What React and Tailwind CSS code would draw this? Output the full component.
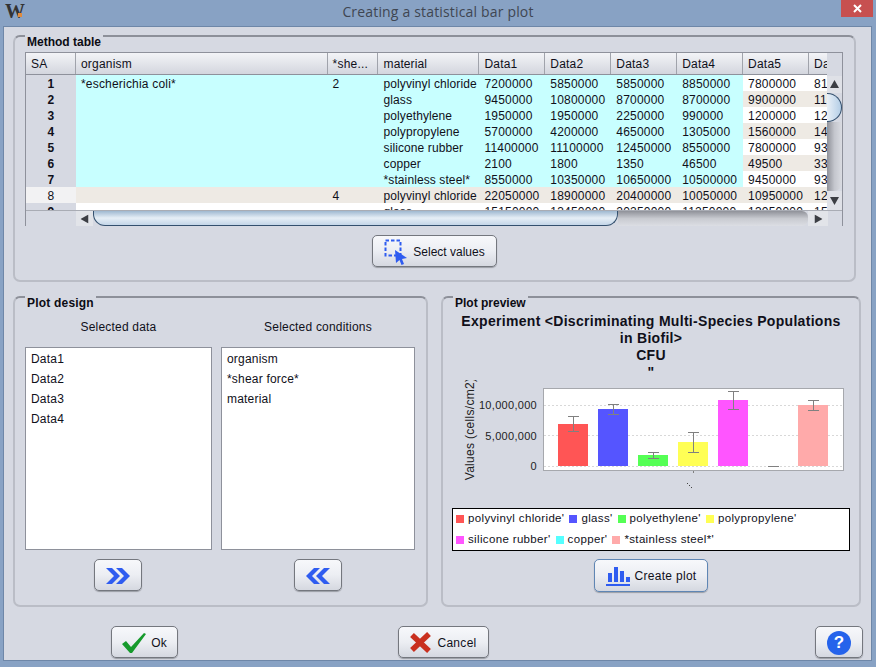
const font = { fontFamily: '"Liberation Sans", Arial, sans-serif' }

const columns = [
  { label: 'organism', w: 'w-[252px] pl-[5px]' },
  { label: '*she...', w: 'w-[50px] pl-[5px]' },
  { label: 'material', w: 'w-[102px] pl-[6px] tracking-[0.1px]' },
  { label: 'Data1', w: 'w-[66px] pl-[5px]' },
  { label: 'Data2', w: 'w-[66px] pl-[5px]' },
  { label: 'Data3', w: 'w-[66px] pl-[5px]' },
  { label: 'Data4', w: 'w-[66px] pl-[5px]' },
  { label: 'Data5', w: 'w-[66px] pl-[5px]' },
  { label: 'Da', w: 'w-[18px] pl-[5px]' },
]

const rows = [
  ['*escherichia coli*', '2', 'polyvinyl chloride', '7200000', '5850000', '5850000', '8850000', '7800000', '81'],
  ['', '', 'glass', '9450000', '10800000', '8700000', '8700000', '9900000', '11'],
  ['', '', 'polyethylene', '1950000', '1950000', '2250000', '990000', '1200000', '12'],
  ['', '', 'polypropylene', '5700000', '4200000', '4650000', '1305000', '1560000', '14'],
  ['', '', 'silicone rubber', '11400000', '11100000', '12450000', '8550000', '7800000', '93'],
  ['', '', 'copper', '2100', '1800', '1350', '46500', '49500', '33'],
  ['', '', '*stainless steel*', '8550000', '10350000', '10650000', '10500000', '9450000', '93'],
  ['', '4', 'polyvinyl chloride', '22050000', '18900000', '20400000', '10050000', '10950000', '12'],
  ['', '', 'glass', '15150000', '13450000', '20250000', '11250000', '13050000', '15'],
]

function cellBg(rowIndex, colIndex) {
  if (rowIndex === 7) return 'bg-[#eeeae4]'
  if (rowIndex === 8) return 'bg-white'
  if (colIndex < 7) return 'bg-[#c8ffff]'
  return rowIndex % 2 === 0 ? 'bg-white' : 'bg-[#eeeae4]'
}

function Group({ title, className, children }) {
  return (
    <div className={`relative rounded-[7px] border-2 border-[#babdc6] border-t-[#8d9099] ${className}`}>
      <div className="absolute left-[10px] top-[-2px] h-[15px] bg-[#d6d9e2] px-[2px] text-[12px] font-bold leading-[15px] text-[#0c0c14]">
        {title}
      </div>
      {children}
    </div>
  )
}

function Button({ className = '', children }) {
  return (
    <div className={`flex h-[32px] items-center justify-center rounded-[5px] border border-[#74777e] bg-gradient-to-b from-[#f7f8fb] via-[#eceef3] to-[#d5d8e0] pt-[1px] text-[12px] text-[#10101a] shadow-[0_1px_1px_#9a9da5] ${className}`}>
      {children}
    </div>
  )
}

function ArrowUp() {
  return <svg width="9" height="8" viewBox="0 0 9 8"><path d="M4.5 0 L9 8 H0 Z" fill="#3c3e44" /></svg>
}

function VerticalScroll() {
  return (
    <div className="flex h-full w-[15px] flex-col bg-[#d6d9e2]">
      <div className="h-[23px]" />
      <div className="flex h-[17px] items-center justify-center bg-[#dfe1e7] pb-[2px]"><ArrowUp /></div>
      <div className="h-[29px] rounded-r-full border border-l-0 border-[#34506e] bg-gradient-to-r from-[#e9f0f7] to-[#b4cee6]" />
      <div className="h-[69px] rounded-br-[8px] bg-gradient-to-r from-[#8f9199] via-[#c4c6cd] to-[#dadce2]" />
      <div className="flex h-[19px] items-center justify-center bg-[#dfe1e7]">
        <div className="rotate-180"><ArrowUp /></div>
      </div>
    </div>
  )
}

function HorizontalScroll() {
  return (
    <div className="flex h-[16px] border-t border-[#a9acb4] bg-[#d6d9e2]">
      <div className="w-[50px]" />
      <div className="flex w-[17px] items-center justify-center bg-[#e2e4e9]">
        <div className="-rotate-90"><ArrowUp /></div>
      </div>
      <div className="h-[15px] w-[525px] rounded-b-[12px] border-x border-b border-[#34506e] bg-gradient-to-b from-[#9fb8d0] via-[#e6eef6] to-[#c4d6e8]" />
      <div className="h-[15px] w-[190px] rounded-r-[6px] bg-gradient-to-b from-[#8f9199] via-[#c8cad0] to-[#dcdee4]" />
      <div className="flex w-[20px] items-center justify-center bg-[#e2e4e9]">
        <div className="rotate-90"><ArrowUp /></div>
      </div>
    </div>
  )
}

function MethodTable() {
  return (
    <div className="flex h-[174px] w-[818px] flex-col border border-[#8e919b] bg-[#d6d9e2] text-[12px] tracking-[0.2px] text-[#10101a]">
      <div className="flex h-[157px]">
        <div className="flex w-[802px] flex-col overflow-hidden">
          <div className="flex h-[22px] shrink-0 border-b border-[#8e919b] bg-gradient-to-b from-[#f3f4f7] to-[#d3d6de]">
            <div className="flex w-[50px] items-center border-r border-[#a0a3ab] pl-[5px]">SA</div>
            {columns.map((col) => (
              <div key={col.label} className={`flex ${col.w} items-center overflow-hidden whitespace-nowrap border-r border-[#a0a3ab] last:border-r-0`}>
                {col.label}
              </div>
            ))}
          </div>
          {rows.map((row, i) => (
            <div key={i} className="flex h-[16px] shrink-0">
              <div className={`w-[50px] text-center leading-[18px] ${i === 7 ? 'bg-[#f2f2f3]' : 'bg-[#d6d9e2] font-bold'}`}>{i + 1}</div>
              {row.map((value, j) => (
                <div key={j} className={`${columns[j].w} overflow-hidden whitespace-nowrap leading-[19px] ${cellBg(i, j)}`}>
                  {value}
                </div>
              ))}
            </div>
          ))}
        </div>
        <VerticalScroll />
      </div>
      <HorizontalScroll />
    </div>
  )
}

function SelectIcon() {
  return (
    <svg width="24" height="26" viewBox="0 0 24 26">
      <rect x="1.5" y="1.5" width="15" height="15" fill="none" stroke="#2f5cf0" strokeWidth="2" strokeDasharray="3.5 2" />
      <path d="M11 11 L23 19 L18 20 L20 25 L17.5 26 L15.5 21 L12 24 Z" fill="#2f5cf0" />
    </svg>
  )
}

function ListBox({ items }) {
  return (
    <div className="h-[203px] border border-[#8e919b] bg-white pl-[5px] pt-[1px] text-[12px] leading-[20px] tracking-[0.2px] text-[#10101a]">
      {items.map((item) => <div key={item}>{item}</div>)}
    </div>
  )
}

function DoubleChevron({ flip }) {
  return (
    <svg width="24" height="18" viewBox="0 0 24 18" className={flip ? 'rotate-180' : ''}>
      <path d="M0 1 H6 L14 9 L6 17 H0 L8 9 Z M10 1 H16 L24 9 L16 17 H10 L18 9 Z" fill="#2f5cf0" />
    </svg>
  )
}

const bars = [
  { x: 558, top: 424, fill: '#ff5555', err: [416, 431] },
  { x: 598, top: 409, fill: '#5555ff', err: [404, 414] },
  { x: 638, top: 455, fill: '#55ff55', err: [452, 458] },
  { x: 678, top: 442, fill: '#ffff55', err: [432, 452] },
  { x: 718, top: 400, fill: '#ff55ff', err: [391, 409] },
  { x: 758, top: 466, fill: '#55ffff', err: [466, 466] },
  { x: 798, top: 405, fill: '#ffaaaa', err: [400, 410] },
]

// svg origin sits at x 443 / y 380 of the window
function BarChart() {
  return (
    <svg width="416" height="115" viewBox="443 380 416 115" className="block" style={font}>
      <rect x="543.5" y="388.5" width="300" height="82" fill="#fff" stroke="#a6a8ad" />
      {[405.5, 435.5, 466.5].map((y) => (
        <line key={y} x1="544" x2="843" y1={y} y2={y} stroke="#d8d8d8" strokeDasharray="2 2" />
      ))}
      {bars.map((b) => (
        <g key={b.x}>
          <rect x={b.x} y={b.top} width="30" height={466 - b.top} fill={b.fill} />
          <line x1={b.x + 15.5} x2={b.x + 15.5} y1={b.err[0]} y2={b.err[1]} stroke="#808080" />
          <line x1={b.x + 10} x2={b.x + 21} y1={b.err[0] + 0.5} y2={b.err[0] + 0.5} stroke="#808080" />
          <line x1={b.x + 10} x2={b.x + 21} y1={b.err[1] + 0.5} y2={b.err[1] + 0.5} stroke="#808080" />
        </g>
      ))}
      <line x1="693.5" x2="693.5" y1="471" y2="473" stroke="#808080" />
      <text x="537" y="409" textAnchor="end" fontSize="11" letterSpacing="0.3" fill="#222">10,000,000</text>
      <text x="537" y="440" textAnchor="end" fontSize="11" letterSpacing="0.3" fill="#222">5,000,000</text>
      <text x="537" y="470" textAnchor="end" fontSize="11" letterSpacing="0.3" fill="#222">0</text>
      <text x="0" y="0" transform="translate(474 429) rotate(-90)" textAnchor="middle" fontSize="12" letterSpacing="0.3" fill="#222">Values (cells/cm2)</text>
      <rect x="687" y="483" width="1" height="1" fill="#444" />
      <rect x="689" y="485" width="1" height="1" fill="#444" />
      <rect x="691" y="487" width="1" height="1" fill="#444" />
    </svg>
  )
}

const legend = [
  [
    ['#ff5555', "polyvinyl chloride'"],
    ['#5555ff', "glass'"],
    ['#55ff55', "polyethylene'"],
    ['#ffff55', "polypropylene'"],
  ],
  [
    ['#ff55ff', "silicone rubber'"],
    ['#55ffff', "copper'"],
    ['#ffaaaa', "*stainless steel*'"],
  ],
]

function Legend() {
  return (
    <div className="mx-[9px] flex h-[43px] flex-col justify-center gap-[5px] border border-black bg-white pl-[3px] text-[11.5px] tracking-[0.35px] text-[#10101a]">
      {legend.map((line, i) => (
        <div key={i} className="flex h-[16px] items-center gap-[5px]">
          {line.map(([color, label]) => (
            <div key={label} className="flex items-center gap-[4px]">
              <span className="h-[8px] w-[8px]" style={{ backgroundColor: color }} />
              <span>{label}</span>
            </div>
          ))}
        </div>
      ))}
    </div>
  )
}

export default function App() {
  return (
    <div className="flex h-[667px] w-[876px] flex-col overflow-hidden bg-[#88a2c4]" style={font}>
      <div className="grid h-[26px] shrink-0 grid-cols-[44px_1fr_44px]">
        <div className="relative pl-[5px] pt-[1px] text-[20px] font-bold leading-[20px] text-[#333]" style={{ fontFamily: '"Liberation Serif", serif' }}>
          W
          <span className="absolute left-[18px] top-[13px] h-[4px] w-[4px] bg-[#e08a3c]" />
        </div>
        <div className="text-center text-[14px] leading-[24px] tracking-[0.17px] text-[#3f4652]" style={{ fontFamily: '"Open Sans", sans-serif' }}>
          Creating a statistical bar plot
        </div>
        <div className="flex justify-end pr-[3px]">
          <div className="flex h-[17px] w-[32px] items-center justify-center bg-[#c75050]">
            <svg width="9" height="9" viewBox="0 0 9 9"><path d="M1 1 L8 8 M8 1 L1 8" stroke="#fff" strokeWidth="2" /></svg>
          </div>
        </div>
      </div>

      <div className="ml-[3px] flex h-[635px] w-[869px] flex-col border border-[#6e87a8] bg-[#d6d9e2] pl-[9px] pt-[8px]">
        <Group title="Method table" className="h-[247px] w-[843px] pl-[10px] pt-[15px]">
          <MethodTable />
          <div className="mt-[9px] flex justify-center pr-[10px]">
            <Button className="w-[125px] gap-[5px]"><SelectIcon /><span>Select values</span></Button>
          </div>
        </Group>

        <div className="mt-[14px] flex gap-[13px]">
          <Group title="Plot design" className="h-[311px] w-[415px] pl-[10px] pt-[21px] text-[12px] tracking-[0.2px] text-[#10101a]">
            <div className="flex gap-[9px]">
              <div className="flex w-[187px] flex-col">
                <div className="mb-[12px] h-[16px] text-center leading-[16px]">Selected data</div>
                <ListBox items={['Data1', 'Data2', 'Data3', 'Data4']} />
                <div className="mt-[9px] flex justify-center pr-[2px]"><Button className="w-[48px]"><DoubleChevron /></Button></div>
              </div>
              <div className="flex w-[194px] flex-col">
                <div className="mb-[12px] h-[16px] text-center leading-[16px]">Selected conditions</div>
                <ListBox items={['organism', '*shear force*', 'material']} />
                <div className="mt-[9px] flex justify-center"><Button className="w-[48px]"><DoubleChevron flip /></Button></div>
              </div>
            </div>
          </Group>

          <Group title="Plot preview" className="h-[311px] w-[420px] pt-[15px]">
            <div className="text-center text-[14px] font-bold leading-[17px] tracking-[0.3px] text-[#10101a]">
              <div>Experiment &lt;Discriminating Multi-Species Populations</div>
              <div>in Biofil&gt;</div>
              <div>CFU</div>
              <div className="h-[16px]">"</div>
            </div>
            <BarChart />
            <div className="mt-[13px]"><Legend /></div>
            <div className="mt-[8px] flex justify-center">
              <Button className="h-[33px] w-[114px] gap-[5px] !border-[#5f86b4] shadow-[0_0_0_1px_#8fb2d8]">
                <svg width="24" height="22" viewBox="0 0 24 22">
                  <path d="M2 8 H6 V17 H2 Z M8 2 H12 V17 H8 Z M14 6 H18 V17 H14 Z M20 12 H24 V17 H20 Z M0 19 H24 V21 H0 Z" fill="#2f5cf0" />
                </svg>
                <span className="tracking-[0.3px]">Create plot</span>
              </Button>
            </div>
          </Group>
        </div>

        <div className="mt-[19px] flex">
          <Button className="ml-[98px] w-[67px] gap-[5px]">
            <svg width="24" height="20" viewBox="0 0 24 20"><path d="M0 11 L4 8 L9 14 L22 0 L24 1 L10 20 H8 Z" fill="#169a2c" /></svg>
            <span>Ok</span>
          </Button>
          <Button className="ml-[220px] w-[91px] gap-[5px]">
            <svg width="22" height="21" viewBox="0 0 22 21"><path d="M2 3 L19 19 M19 2 L2 18" stroke="#c9301f" strokeWidth="5.5" /></svg>
            <span className="tracking-[0.3px]">Cancel</span>
          </Button>
          <Button className="ml-[326px] w-[48px]">
            <span className="flex h-[24px] w-[24px] items-center justify-center rounded-full bg-[#2563eb] text-[17px] font-bold leading-none text-white">?</span>
          </Button>
        </div>
      </div>
    </div>
  )
}
